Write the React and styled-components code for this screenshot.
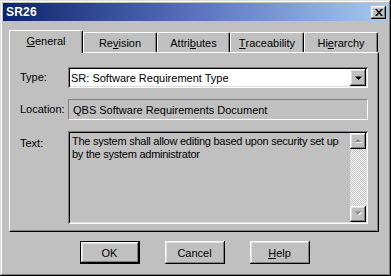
import React from "react"
import styled, { createGlobalStyle } from "styled-components"

const GlobalStyle = createGlobalStyle`
    html, body {
        margin: 0;
        padding: 0;
        background: #c0c0c0;
    }
    * {
        box-sizing: border-box;
    }
`

const font = `"Liberation Sans", Arial, sans-serif`

const raised = `
    box-shadow: inset -1px -1px #000, inset 1px 1px #fff, inset -2px -2px #808080, inset 2px 2px #dfdfdf;
`

const sunken = `
    box-shadow: inset 1px 1px #808080, inset -1px -1px #fff, inset 2px 2px #000, inset -2px -2px #dfdfdf;
`

function Mnemonic({ text, at }) {
    const i = text.indexOf(at)
    if (i < 0) return text
    return (
        <>
            {text.slice(0, i)}
            <u>{at}</u>
            {text.slice(i + 1)}
        </>
    )
}

function ArrowIcon({ up, disabled }) {
    if (disabled) {
        return (
            <svg width="9" height="6" viewBox="0 0 9 6">
                <polygon points={up ? "2,5 5,2 8,5" : "2,1.5 8,1.5 5,4.5"} fill="#fff" />
                <polygon points={up ? "1,4 4,1 7,4" : "1,0.5 7,0.5 4,3.5"} fill="#808080" />
            </svg>
        )
    }
    return (
        <svg width="7" height="4" viewBox="0 0 7 4">
            <polygon points="0,0.5 7,0.5 3.5,4" fill="#000" />
        </svg>
    )
}

const tabs = [
    { label: "General", key: "G", width: 74 },
    { label: "Revision", key: "v", width: 74 },
    { label: "Attributes", key: "b", width: 73 },
    { label: "Traceability", key: "T", width: 74 },
    { label: "Hierarchy", key: "e", width: 74 },
]

export default function App() {
    return (
        <>
            <GlobalStyle />
            <Window>
                <TitleBar>
                    <TitleText>SR26</TitleText>
                    <CloseButton>
                        <svg width="8" height="7" viewBox="0 0 8 7">
                            <path d="M0 0h2l2 2.5L6 0h2L5 3.5 8 7H6L4 4.5 2 7H0l3-3.5z" fill="#000" />
                        </svg>
                    </CloseButton>
                </TitleBar>

                <Body>
                    <TabStrip>
                        {tabs.map((t, i) => (
                            <Tab key={t.label} $active={i === 0} $width={t.width}>
                                <Mnemonic text={t.label} at={t.key} />
                            </Tab>
                        ))}
                    </TabStrip>

                    <Panel>
                        <FieldGrid>
                            <Label>Type:</Label>
                            <Combo>
                                <ComboText>SR: Software Requirement Type</ComboText>
                                <DropButton>
                                    <ArrowIcon />
                                </DropButton>
                            </Combo>

                            <Label>Location:</Label>
                            <StaticField>QBS Software Requirements Document</StaticField>

                            <Label $top>Text:</Label>
                            <TextBox>
                                <TextContent>
                                    The system shall allow editing based upon security set up
                                    <br />
                                    by the system administrator
                                </TextContent>
                                <ScrollBar>
                                    <ScrollButton>
                                        <ArrowIcon up disabled />
                                    </ScrollButton>
                                    <ScrollTrack />
                                    <ScrollButton>
                                        <ArrowIcon disabled />
                                    </ScrollButton>
                                </ScrollBar>
                            </TextBox>
                        </FieldGrid>
                    </Panel>
                </Body>

                <ButtonRow>
                    <Button $default>OK</Button>
                    <Button>Cancel</Button>
                    <Button>
                        <Mnemonic text="Help" at="H" />
                    </Button>
                </ButtonRow>
            </Window>
        </>
    )
}

const Window = styled.div`
    width: 391px;
    height: 276px;
    padding: 3px;
    background: #c0c0c0;
    display: flex;
    flex-direction: column;
    font-family: ${font};
    font-size: 11px;
    color: #000;
    box-shadow: inset -1px -1px #000, inset 1px 1px #dfdfdf, inset -2px -2px #808080, inset 2px 2px #fff;
`

const TitleBar = styled.div`
    height: 18px;
    display: flex;
    align-items: center;
    justify-content: space-between;
    padding: 0 2px 0 3px;
    background: linear-gradient(to right, #0a246a 0%, #5a72bf 50%, #a6caf0 100%);
`

const TitleText = styled.span`
    color: #fff;
    font-weight: bold;
    font-size: 12px;
    letter-spacing: 0.2px;
`

const CloseButton = styled.div`
    width: 15px;
    height: 13px;
    background: #c0c0c0;
    display: flex;
    align-items: center;
    justify-content: center;
    ${raised}
`

const Body = styled.div`
    margin-top: 9px;
    padding: 0 9px 0 6px;
    display: flex;
    flex-direction: column;
`

const TabStrip = styled.div`
    height: 22px;
    display: flex;
    align-items: flex-end;
`

const Tab = styled.div`
    position: relative;
    z-index: ${p => (p.$active ? 2 : 1)};
    width: ${p => p.$width}px;
    height: ${p => (p.$active ? "23px" : "20px")};
    margin-bottom: ${p => (p.$active ? "-1px" : "0")};
    display: flex;
    align-items: center;
    justify-content: center;
    padding-bottom: ${p => (p.$active ? "3px" : "0")};
    background: #c0c0c0;
    border-top: 1px solid #fff;
    border-left: 1px solid #fff;
    border-right: 1px solid #000;
    border-radius: 2px 2px 0 0;
    box-shadow: inset -1px 0 #808080;
    font-size: 11px;

    u {
        text-decoration-thickness: 1px;
        text-underline-offset: 1px;
    }
`

const Panel = styled.div`
    height: 180px;
    background: #c0c0c0;
    border-top: 1px solid #fff;
    border-left: 1px solid #fff;
    border-right: 1px solid #000;
    border-bottom: 1px solid #000;
    box-shadow: inset -1px -1px #808080;
    padding: 14px 0 0 10px;
`

const FieldGrid = styled.div`
    display: grid;
    grid-template-columns: 48px 300px;
    grid-template-rows: 21px 21px 93px;
    row-gap: 11px;
    align-items: center;
`

const Label = styled.div`
    align-self: ${p => (p.$top ? "start" : "center")};
    margin-top: ${p => (p.$top ? "6px" : "-2px")};
`

const Combo = styled.div`
    height: 21px;
    background: #fff;
    display: flex;
    align-items: center;
    justify-content: space-between;
    padding: 2px;
    ${sunken}
`

const ComboText = styled.span`
    padding-left: 1px;
`

const DropButton = styled.div`
    width: 16px;
    height: 17px;
    background: #c0c0c0;
    display: flex;
    align-items: center;
    justify-content: center;
    ${raised}
`

const StaticField = styled.div`
    height: 21px;
    display: flex;
    align-items: center;
    padding-left: 4px;
    border-top: 1px solid #808080;
    border-left: 1px solid #808080;
    border-bottom: 1px solid #fff;
    border-right: 1px solid #fff;
`

const TextBox = styled.div`
    height: 93px;
    display: flex;
    padding: 2px;
    ${sunken}
`

const TextContent = styled.div`
    flex: 1;
    padding: 2px 0 0 2px;
    line-height: 13px;
    white-space: nowrap;
    letter-spacing: -0.25px;
    overflow: hidden;
`

const ScrollBar = styled.div`
    width: 16px;
    display: flex;
    flex-direction: column;
`

const ScrollButton = styled.div`
    height: 16px;
    background: #c0c0c0;
    display: flex;
    align-items: center;
    justify-content: center;
    ${raised}
`

const ScrollTrack = styled.div`
    flex: 1;
    background: repeating-conic-gradient(#c0c0c0 0 25%, #fff 0 50%) 0 0 / 2px 2px;
`

const ButtonRow = styled.div`
    margin-top: 9px;
    display: flex;
    justify-content: center;
    gap: 25px;
    padding-right: 2px;
`

const Button = styled.div`
    width: 60px;
    height: 23px;
    display: flex;
    align-items: center;
    justify-content: center;
    background: #c0c0c0;
    ${p =>
        p.$default
            ? `border: 1px solid #000;
               box-shadow: inset -1px -1px #000, inset 1px 1px #fff, inset -2px -2px #808080, inset 2px 2px #dfdfdf;`
            : raised}
`
